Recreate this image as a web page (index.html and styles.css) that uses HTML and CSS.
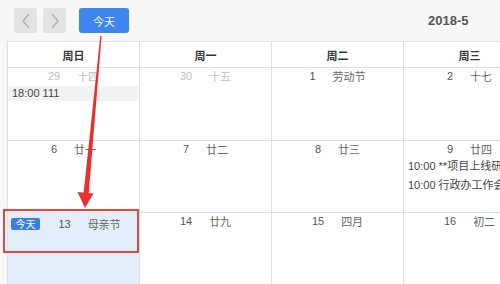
FILE: index.html
```html
<!DOCTYPE html>
<html lang="zh">
<head>
<meta charset="utf-8">
<title>日历 2018-5</title>
<link rel="stylesheet" href="styles.css">
</head>
<body>
<div class="page">
  <div class="toolbar">
    <button class="nav-btn" aria-label="上一月">
      <svg width="10" height="16" viewBox="0 0 10 16"><path d="M8 1 L2 8 L8 15" fill="none" stroke="#a9a9a9" stroke-width="1.2"/></svg>
    </button>
    <button class="nav-btn" aria-label="下一月">
      <svg width="10" height="16" viewBox="0 0 10 16"><path d="M2 1 L8 8 L2 15" fill="none" stroke="#a9a9a9" stroke-width="1.2"/></svg>
    </button>
    <button class="today-btn">今天</button>
    <div class="title">2018-5</div>
  </div>

  <div class="calendar">
    <div class="head">周日</div>
    <div class="head">周一</div>
    <div class="head">周二</div>
    <div class="head">周三</div>

    <div class="cell row1">
      <div class="date other"><span class="num">29</span><span class="lunar">十四</span></div>
      <div class="event first gray">18:00 111</div>
    </div>
    <div class="cell row1"><div class="date other"><span class="num">30</span><span class="lunar">十五</span></div></div>
    <div class="cell row1"><div class="date"><span class="num">1</span><span class="lunar">劳动节</span></div></div>
    <div class="cell row1"><div class="date"><span class="num">2</span><span class="lunar">十七</span></div></div>

    <div class="cell"><div class="date"><span class="num">6</span><span class="lunar">廿一</span></div></div>
    <div class="cell"><div class="date"><span class="num">7</span><span class="lunar">廿二</span></div></div>
    <div class="cell"><div class="date"><span class="num">8</span><span class="lunar">廿三</span></div></div>
    <div class="cell">
      <div class="date"><span class="num">9</span><span class="lunar">廿四</span></div>
      <div class="event first">10:00 **项目上线研讨会</div>
      <div class="event">10:00 行政办工作会议</div>
    </div>

    <div class="cell today">
      <div class="date"><span class="badge">今天</span><span class="grow"><span class="num">13</span><span class="lunar">母亲节</span></span></div>
    </div>
    <div class="cell"><div class="date"><span class="num">14</span><span class="lunar">廿九</span></div></div>
    <div class="cell"><div class="date"><span class="num">15</span><span class="lunar">四月</span></div></div>
    <div class="cell"><div class="date"><span class="num">16</span><span class="lunar">初二</span></div></div>
  </div>

  <div class="highlight-box"></div>
  <svg class="arrow" width="500" height="284" viewBox="0 0 500 284">
    <polygon points="100.3,36 101.6,36 88.6,195 83.4,195" fill="#e8302f"/>
    <polygon points="77.5,192 93.5,193.5 85,208" fill="#e8302f"/>
  </svg>
</div>
</body>
</html>
```
FILE: styles.css
```css
html, body {
  margin: 0;
  padding: 0;
}
body {
  width: 500px;
  height: 284px;
  overflow: hidden;
  background: #f8f8f8;
  font-family: "Liberation Sans", "Noto Sans CJK SC", Arial, sans-serif;
  font-size: 11px;
  color: #555;
}
.page {
  position: relative;
  width: 500px;
  height: 284px;
  overflow: hidden;
}
.toolbar {
  display: flex;
  align-items: center;
  height: 41px;
  padding-left: 14px;
  box-sizing: border-box;
}
.nav-btn {
  width: 23px;
  height: 25px;
  margin: 0 6px 0 0;
  padding: 0;
  border: none;
  border-radius: 2px;
  background: #e3e3e3;
  display: flex;
  align-items: center;
  justify-content: center;
}
.today-btn {
  margin-left: 7px;
  width: 50px;
  height: 25px;
  padding: 0;
  border: none;
  border-radius: 3px;
  background: #3d86ee;
  color: #fff;
  font-family: "Noto Sans CJK SC", sans-serif;
  font-size: 11px;
}
.title {
  margin-left: 299px;
  font-size: 13px;
  font-weight: bold;
  color: #555;
}
.calendar {
  margin-left: 7px;
  display: grid;
  grid-template-columns: repeat(4, 132px);
  grid-template-rows: 26px 73px 72px 72px;
  background: #fff;
  border-top: 1px solid #e2e2e2;
  width: max-content;
}
.head {
  border-left: 1px solid #e0e0e0;
  border-bottom: 1px solid #e0e0e0;
  display: flex;
  align-items: center;
  justify-content: center;
  font-family: "Noto Sans CJK SC", sans-serif;
  font-weight: bold;
  font-size: 11px;
  color: #333;
}
.cell {
  border-left: 1px solid #e0e0e0;
  border-bottom: 1px solid #e0e0e0;
  display: flex;
  flex-direction: column;
  overflow: hidden;
}
.date {
  display: flex;
  justify-content: center;
  align-items: center;
  height: 16px;
  line-height: 16px;
  white-space: nowrap;
}
.num {
  color: #555;
}
.lunar {
  margin-left: 17px;
  font-family: "Noto Sans CJK SC", sans-serif;
  color: #666;
}
.other .num,
.other .lunar {
  color: #c0c0c0;
}
.event {
  margin: 4px 1px 0 1px;
  padding-left: 3px;
  height: 15px;
  line-height: 15px;
  white-space: nowrap;
  overflow: hidden;
  color: #444;
  font-family: "Liberation Sans", "Noto Sans CJK SC", sans-serif;
}
.event.first {
  margin-top: 2px;
}
.event.gray {
  background: #f2f2f2;
}
.today {
  background: #e2eef9;
}
.today .date {
  justify-content: flex-start;
  padding-top: 3px;
}
.badge {
  margin-left: 3px;
  width: 29px;
  height: 12px;
  line-height: 12px;
  border-radius: 2px;
  background: #3b7fe2;
  color: #fff;
  text-align: center;
  font-family: "Noto Sans CJK SC", sans-serif;
  font-size: 10px;
}
.grow {
  flex: 1;
  display: flex;
  justify-content: center;
}
.highlight-box {
  position: absolute;
  left: 3px;
  top: 209px;
  width: 132px;
  height: 40px;
  border: 2px solid #e44444;
}
.arrow {
  position: absolute;
  left: 0;
  top: 0;
}
```
